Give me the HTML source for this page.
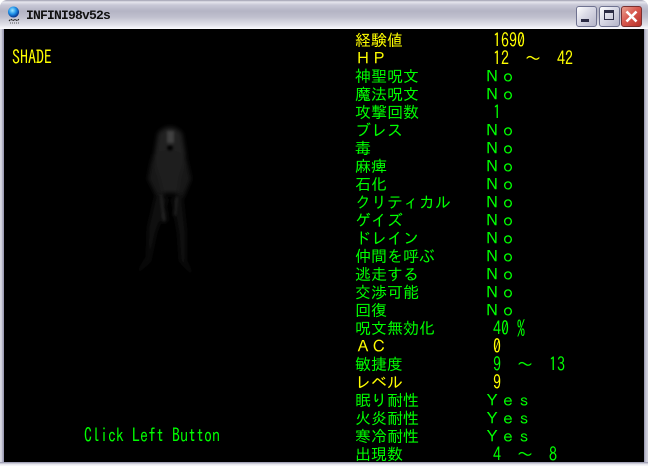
<!DOCTYPE html>
<html><head><meta charset="utf-8"><style>
html,body{margin:0;padding:0;width:648px;height:466px;overflow:hidden;background:#fff}
#win{position:absolute;left:0;top:0;width:648px;height:466px;background:#c8c8d6;border-radius:7px 7px 0 0;overflow:hidden}
#tb{position:absolute;left:0;top:0;width:648px;height:29px;background:linear-gradient(#9c9cae 0,#e6e6ee 2px,#c8c8d6 5px,#b4b4c4 11px,#c0c0ce 17px,#e2e2ea 25px,#fcfcfe 29px);border-radius:7px 7px 0 0}
#edge{position:absolute;left:0;top:29px;width:648px;height:437px;background:linear-gradient(90deg,#d6d6e2 0,#d6d6e2 1px,#c6c6d4 2px,#9c9cb4 3px,#9c9cb4 4px,#000 4px,#000 644px,#8c8ca4 644px,#b4b4c4 645px,#d0d0dc 647px)}
#bot{position:absolute;left:0;top:462px;width:648px;height:4px;background:linear-gradient(#8e8ea8 0,#b8b8c8 1px,#dedee6 2px,#f4f4f8 3px)}
#client{position:absolute;left:4px;top:29px;width:640px;height:433px;background:#000;overflow:hidden}
#title{position:absolute;left:26px;top:8px;font:bold 13px/16px "Liberation Mono","DejaVu Sans Mono",monospace;letter-spacing:-.8px;color:#111;white-space:pre}
.b{position:absolute;top:6px;width:21px;height:21px;box-sizing:border-box;border:1px solid #6f7290;border-radius:3px;background:linear-gradient(135deg,#fff 0,#dcdce8 40%,#b4b4c8 100%)}
.t{position:absolute;font:16px/18px "IPAGothic","Noto Sans CJK JP",monospace;white-space:pre;color:#0f0}
.y{color:#ff0}
.l{transform:scaleY(1.17);transform-origin:50% 50%}
#txt{filter:url(#thr)}
</style></head><body>
<svg width="0" height="0" style="position:absolute"><filter id="thr" x="0" y="0" width="100%" height="100%" color-interpolation-filters="sRGB"><feComponentTransfer><feFuncR type="discrete" tableValues="0 0 1"/><feFuncG type="discrete" tableValues="0 0 1"/><feFuncB type="discrete" tableValues="0 0 0"/></feComponentTransfer></filter><filter id="bl" x="-30%" y="-30%" width="160%" height="160%"><feGaussianBlur stdDeviation="2.4"/></filter><filter id="bl2"><feGaussianBlur stdDeviation="1.2"/></filter></svg>
<div id="win">
<div id="tb"></div>
<div id="edge"></div>
<div id="bot"></div>
<svg style="position:absolute;left:7px;top:6px" width="16" height="18" viewBox="0 0 16 18"><defs><radialGradient id="g" cx=".4" cy=".35" r=".7"><stop offset="0" stop-color="#9fe8ff"/><stop offset=".5" stop-color="#1e90e8"/><stop offset="1" stop-color="#04207a"/></radialGradient></defs><circle cx="6.5" cy="6" r="5.5" fill="url(#g)"/><path d="M2 15l2-2 2 2 2-2 2 2 2-2" stroke="#222" fill="none" stroke-width="1.1" stroke-dasharray="2 1"/><path d="M3 17h9" stroke="#555" stroke-dasharray="1 1"/></svg>
<div id="title">INFINI98v52s</div>
<div class="b" style="left:576px"><div style="position:absolute;left:4px;top:12px;width:8px;height:3px;background:#2b2b44"></div></div>
<div class="b" style="left:599px"><div style="position:absolute;left:4px;top:3px;width:10px;height:10px;box-sizing:border-box;border:1px solid #2b2b44;border-top-width:3px"></div></div>
<div class="b" style="left:621px;background:linear-gradient(135deg,#e8a090 0,#d85a50 45%,#b83028 100%);border-color:#7a3030"><svg width="19" height="19" style="position:absolute;left:0;top:0"><path d="M4.5 4.5l10 10M14.5 4.5l-10 10" stroke="#fff" stroke-width="2.6"/></svg></div>
<div id="client"></div>
<svg style="position:absolute;left:120px;top:115px;opacity:.72" width="100" height="170" viewBox="0 0 100 170">
<g filter="url(#bl)">
<path d="M38 18 Q50 6 62 18 L66 42 L46 42 L34 42Z" fill="#2e2e2e"/>
<path d="M33 40 Q48 30 65 40 L63 78 L40 78Z" fill="#2a2a2a"/>
<path d="M32 42 L28 64 L38 84 L43 108 L47 106 L44 82 L39 62Z" fill="#242424"/>
<path d="M66 42 L71 64 L62 86 L55 102 L53 100 L57 82 L60 62Z" fill="#202020"/>
<path d="M36 78 L48 84 L36 118 L30 146 L16 160 L27 142 L28 112Z" fill="#161616"/>
<path d="M52 84 L62 78 L66 116 L66 146 L74 162 L60 146 L58 118Z" fill="#141414"/>
</g>
<g filter="url(#bl2)">
<path d="M47 16 L54 16 L54 28 L47 28Z" fill="#5a5a5a"/>
<ellipse cx="50" cy="33" rx="3" ry="2.5" fill="#060606"/>
<path d="M41 80 L44 106" stroke="#404040" stroke-width="1.4" fill="none"/>
<path d="M57 82 L55 100" stroke="#383838" stroke-width="1.4" fill="none"/>
</g>
</svg>
<div id="txt" style="position:absolute;left:0;top:0;width:648px;height:466px">
<div class="t y l" style="left:12px;top:48px">SHADE</div>
<div class="t l" style="left:84px;top:426px">Click Left Button</div>

<div class="t y" style="left:355px;top:31px">経験値</div><div class="t y l" style="left:493px;top:31px">1690</div>
<div class="t y" style="left:355px;top:49px">ＨＰ</div><div class="t y l" style="left:493px;top:49px">12  ～  42</div>
<div class="t" style="left:355px;top:67px">神聖呪文</div><div class="t" style="left:484px;top:67px">Ｎｏ</div>
<div class="t" style="left:355px;top:85px">魔法呪文</div><div class="t" style="left:484px;top:85px">Ｎｏ</div>
<div class="t" style="left:355px;top:103px">攻撃回数</div><div class="t l" style="left:493px;top:103px">1</div>
<div class="t" style="left:355px;top:121px">ブレス</div><div class="t" style="left:484px;top:121px">Ｎｏ</div>
<div class="t" style="left:355px;top:139px">毒</div><div class="t" style="left:484px;top:139px">Ｎｏ</div>
<div class="t" style="left:355px;top:157px">麻痺</div><div class="t" style="left:484px;top:157px">Ｎｏ</div>
<div class="t" style="left:355px;top:175px">石化</div><div class="t" style="left:484px;top:175px">Ｎｏ</div>
<div class="t" style="left:355px;top:193px">クリティカル</div><div class="t" style="left:484px;top:193px">Ｎｏ</div>
<div class="t" style="left:355px;top:211px">ゲイズ</div><div class="t" style="left:484px;top:211px">Ｎｏ</div>
<div class="t" style="left:355px;top:229px">ドレイン</div><div class="t" style="left:484px;top:229px">Ｎｏ</div>
<div class="t" style="left:355px;top:247px">仲間を呼ぶ</div><div class="t" style="left:484px;top:247px">Ｎｏ</div>
<div class="t" style="left:355px;top:265px">逃走する</div><div class="t" style="left:484px;top:265px">Ｎｏ</div>
<div class="t" style="left:355px;top:283px">交渉可能</div><div class="t" style="left:484px;top:283px">Ｎｏ</div>
<div class="t" style="left:355px;top:301px">回復</div><div class="t" style="left:484px;top:301px">Ｎｏ</div>
<div class="t" style="left:355px;top:319px">呪文無効化</div><div class="t l" style="left:493px;top:319px">40 %</div>
<div class="t y" style="left:355px;top:337px">ＡＣ</div><div class="t y l" style="left:493px;top:337px">0</div>
<div class="t" style="left:355px;top:355px">敏捷度</div><div class="t l" style="left:493px;top:355px">9  ～  13</div>
<div class="t y" style="left:355px;top:373px">レベル</div><div class="t y l" style="left:493px;top:373px">9</div>
<div class="t" style="left:355px;top:391px">眠り耐性</div><div class="t" style="left:484px;top:391px">Ｙｅｓ</div>
<div class="t" style="left:355px;top:409px">火炎耐性</div><div class="t" style="left:484px;top:409px">Ｙｅｓ</div>
<div class="t" style="left:355px;top:427px">寒冷耐性</div><div class="t" style="left:484px;top:427px">Ｙｅｓ</div>
<div class="t" style="left:355px;top:445px">出現数</div><div class="t l" style="left:493px;top:445px">4  ～  8</div>
</div>
</div>
</body></html>
